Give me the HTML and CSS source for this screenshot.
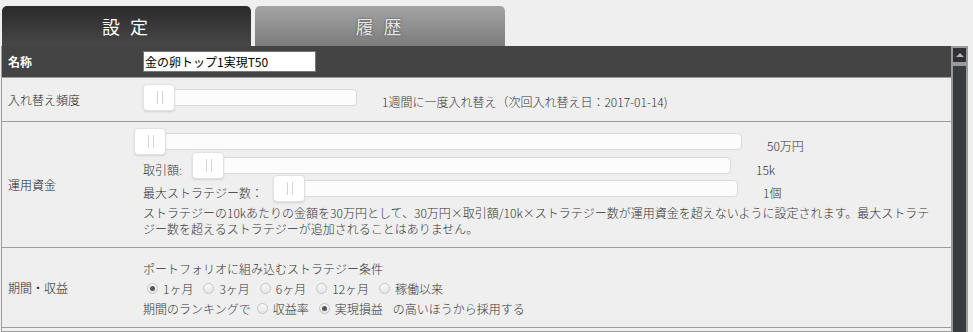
FILE: index.html
```html
<!DOCTYPE html>
<html lang="ja">
<head>
  <meta charset="UTF-8" />
  <title>設定</title>
  <link rel="stylesheet" href="styles.css">
</head>
<body>
  <div class="page">
    <!-- Tabs -->
    <div class="tabs">
      <div class="tab tab-active">設 定</div>
      <div class="tab">履 歴</div>
    </div>

    <div class="panel">
      <div class="settings">
        <!-- Name -->
        <div class="row row-head">
          <div class="label">名称</div>
          <div class="content">
            <input type="text" class="name-input" value="金の卵トップ1実現T50">
          </div>
        </div>

        <!-- Rebalance frequency -->
        <div class="row row-freq">
          <div class="label">入れ替え頻度</div>
          <div class="content">
            <div class="line">
              <div class="slider slider-freq"><span class="handle"></span></div>
              <span class="value">1週間に一度入れ替え（次回入れ替え日：2017-01-14)</span>
            </div>
          </div>
        </div>

        <!-- Capital -->
        <div class="row row-capital">
          <div class="label">運用資金</div>
          <div class="content">
            <div class="line line-first">
              <div class="slider slider-capital"><span class="handle"></span></div>
              <span class="value">50万円</span>
            </div>
            <div class="line">
              <span class="slider-label">取引額:</span>
              <div class="slider slider-amount"><span class="handle"></span></div>
              <span class="value">15k</span>
            </div>
            <div class="line">
              <span class="slider-label">最大ストラテジー数：</span>
              <div class="slider slider-count"><span class="handle"></span></div>
              <span class="value">1個</span>
            </div>
            <p class="note">ストラテジーの10kあたりの金額を30万円として、30万円×取引額/10k×ストラテジー数が運用資金を超えないように設定されます。最大ストラテ<br>ジー数を超えるストラテジーが追加されることはありません。</p>
          </div>
        </div>

        <!-- Period / profit -->
        <div class="row row-period">
          <div class="label">期間・収益</div>
          <div class="content">
            <div class="opt-line">ポートフォリオに組み込むストラテジー条件</div>
            <div class="opt-line">
              <span class="radio on"><i></i>1ヶ月</span>
              <span class="radio"><i></i>3ヶ月</span>
              <span class="radio"><i></i>6ヶ月</span>
              <span class="radio"><i></i>12ヶ月</span>
              <span class="radio"><i></i>稼働以来</span>
            </div>
            <div class="opt-line">
              期間のランキングで
              <span class="radio radio-gap"><i></i>収益率</span>
              <span class="radio on"><i></i>実現損益</span>
              <span class="after">の高いほうから採用する</span>
            </div>
          </div>
        </div>

        <div class="row row-next">
          <div class="label"></div>
          <div class="content"></div>
        </div>
      </div>

      <!-- Fake scrollbar -->
      <div class="scrollbar">
        <div class="sb-up"><span class="sb-arrow"></span></div>
        <div class="sb-track"></div>
      </div>
    </div>
  </div>
</body>
</html>
```

FILE: styles.css
```css
* {
  box-sizing: border-box;
  margin: 0;
  padding: 0;
}

html, body {
  overflow: hidden;
}

body {
  background-color: #efefef;
  font-family: "Noto Sans CJK JP", "Noto Sans", sans-serif;
  font-size: 12px;
  font-weight: 300;
  color: #333;
  height: 332px;
}

.page {
  padding: 6px 0 0 1px;
}

/* Tabs */
.tabs {
  display: flex;
  gap: 4px;
  margin-left: 1px;
  height: 40px;
}

.tab {
  width: 250px;
  border-radius: 5px 5px 0 0;
  display: flex;
  align-items: center;
  justify-content: center;
  font-size: 18px;
  font-weight: 400;
  letter-spacing: 3px;
  color: #e8e8e8;
  background: linear-gradient(#a4a4a4, #7c7c7c);
  text-shadow: 0 0 2px #555, 0 0 1px #444;
}

.tab-active {
  width: 249px;
  color: #fff;
  background: linear-gradient(#2a2a2a, #484848);
  text-shadow: none;
}

/* Panel */
.panel {
  display: flex;
  height: 286px;
}

.settings {
  width: 950px;
  border-left: 1px solid #9c9c9c;
}

.row {
  display: flex;
  border-bottom: 1px solid #9c9c9c;
}

.label {
  width: 141px;
  flex: none;
  padding-left: 6px;
  display: flex;
  align-items: center;
  color: #222;
}

.content {
  flex: 1;
  padding-right: 6px;
}

.row-head {
  height: 32px;
  background-color: #444;
}

.row-head .label {
  color: #fff;
  font-weight: bold;
}

.row-head .content {
  display: flex;
  align-items: center;
}

.name-input {
  width: 173px;
  height: 21px;
  border: 1px solid #777;
  background: #fff;
  padding: 0 1px;
  font-family: inherit;
  font-size: 12px;
  font-weight: 400;
  color: #000;
  outline: none;
}

.row-freq {
  height: 44px;
}

.row-freq .content,
.row-capital .content {
  padding-top: 6px;
}

.row-capital {
  height: 126px;
}

.row-period {
  height: 80px;
}

.row-period .content {
  padding-top: 10px;
}

.row-next {
  height: 4px;
}

/* Slider lines */
.line {
  display: flex;
  align-items: flex-start;
  height: 23px;
}

.line-first {
  height: 24px;
  margin-left: -9px;
}

.slider {
  position: relative;
  flex: none;
  height: 17px;
  margin-top: 5px;
  background: #fcfcfc;
  border: 1px solid #dadada;
  border-radius: 4px;
}

.slider-freq { width: 214px; }
.slider-capital { width: 608px; }
.slider-amount { width: 539px; }
.slider-count { width: 465px; }

.handle {
  position: absolute;
  left: -1px;
  top: -6px;
  width: 32px;
  height: 27px;
  background: #fff;
  border: 1px solid #e2e2e2;
  border-radius: 4px;
  box-shadow: 0 1px 2px rgba(0, 0, 0, 0.12);
}

.handle::before {
  content: "";
  position: absolute;
  left: 13px;
  top: 6px;
  width: 4px;
  height: 13px;
  border-left: 1px solid #d4d4d4;
  border-right: 1px solid #d4d4d4;
}

.slider-label,
.value {
  line-height: 16px;
  margin-top: 10px;
  white-space: nowrap;
}

.slider-label {
  margin-right: 10px;
}

.value {
  margin-left: 25px;
}

.note {
  margin-top: 7px;
  line-height: 16px;
  white-space: nowrap;
}

/* Radios */
.opt-line {
  display: flex;
  align-items: center;
  height: 20px;
  white-space: nowrap;
}

.radio {
  display: inline-flex;
  align-items: center;
  margin-right: 6px;
}

.radio i {
  position: relative;
  width: 11px;
  height: 11px;
  margin: 0 5px 0 4px;
  border: 1px solid #c4c4c4;
  border-radius: 50%;
  background: linear-gradient(#f8f8f8, #e6e6e6);
}

.radio.on i::after {
  content: "";
  position: absolute;
  left: 2px;
  top: 2px;
  width: 5px;
  height: 5px;
  border-radius: 50%;
  background: #555;
}

.radio-gap {
  margin-left: 2px;
}

.after {
  margin-left: 4px;
}

/* Scrollbar */
.scrollbar {
  width: 17px;
  background: #9a9a9a;
  padding: 2px 2px 0;
  display: flex;
  flex-direction: column;
  gap: 4px;
}

.sb-up {
  height: 14px;
  background: #303135;
  display: flex;
  align-items: center;
  justify-content: center;
}

.sb-arrow {
  width: 0;
  height: 0;
  border-left: 4px solid transparent;
  border-right: 4px solid transparent;
  border-bottom: 4px solid #b9b3ad;
}

.sb-track {
  flex: 1;
  background: #3a3b3f;
}
```
